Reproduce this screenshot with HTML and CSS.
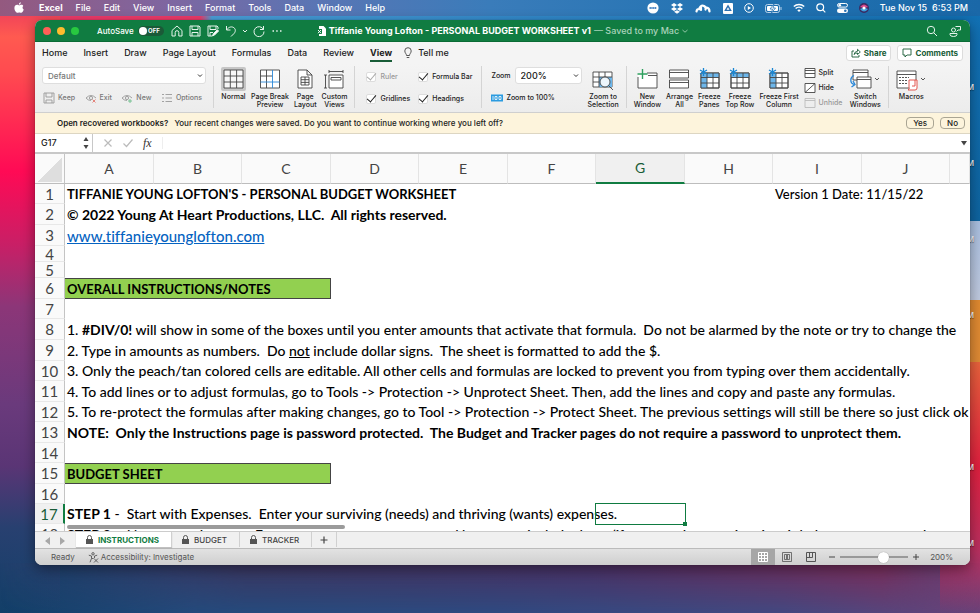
FILE: index.html
```html
<!DOCTYPE html>
<html lang="en">
<head>
<meta charset="utf-8">
<title>PERSONAL BUDGET WORKSHEET v1</title>
<link rel="stylesheet" href="styles.css">
</head>
<body>
<div class="desktop">
  <div class="files" aria-hidden="true">
    <span>M</span><span>M</span><span>M</span><span>M</span><span class="gone"></span><span>M</span><span>M</span>
  </div>

  <header class="menubar">
    <nav class="menus">
      <svg class="apple" viewBox="0 0 10 12"><path fill="#fff" d="M6.8.3C6.9 1.500 5.900 2.700 4.900 2.700 4.800 1.500 5.800.5 6.800.3zM9.300 4.100C8.200 4.800 8.300 6.800 9.700 7.400 9.200 8.900 8.300 10.800 7.200 10.800 6.500 10.800 6.200 10.400 5.300 10.400 4.400 10.400 4 10.800 3.400 10.800 2 10.800.4 8.200.4 6 .4 3.800 1.800 2.800 3.100 2.800 4 2.800 4.700 3.400 5.200 3.400 5.700 3.400 6.500 2.700 7.600 2.800 8.300 2.800 9 3.300 9.300 4.100z"/></svg>
      <a href="#" class="app">Excel</a><a href="#">File</a><a href="#">Edit</a><a href="#">View</a><a href="#">Insert</a><a href="#">Format</a><a href="#">Tools</a><a href="#">Data</a><a href="#">Window</a><a href="#">Help</a>
    </nav>
    <div class="extras">
      <svg width="12" height="12" viewBox="0 0 12 12"><circle cx="6" cy="6" r="5.600" fill="#fff"/><path d="M2.500 6h7" stroke="#4a86c4" stroke-width="1.800" stroke-dasharray="1.400 .4"/></svg>
      <svg width="12" height="11" viewBox="0 0 12 11" fill="#fff"><path d="M3 0l3 2-3 2-3-2zM9 0l3 2-3 2-3-2zM3 4l3 2-3 2-3-2zM9 4l3 2-3 2-3-2zM6 7.200l3 1.600-3 2-3-2z"/></svg>
      <svg width="16" height="9" viewBox="0 0 16 9" fill="none" stroke="#fff" stroke-width="2.200" stroke-linecap="round"><path d="M1.500 7.500Q2 4.500 4.500 5.200M4.500 4Q6.500.5 9 2T10.500 5.500M6 3v3M11.500 3.500Q14.500 4 14.500 7.500"/></svg>
      <svg width="10" height="11" viewBox="0 0 10 11"><rect width="10" height="11" rx="1" fill="#fff"/><path d="M5 2.800l2.600 4.600H2.400z" fill="none" stroke="#2c6fb0" stroke-width="1.400"/></svg>
      <svg width="10" height="10" viewBox="0 0 10 10"><circle cx="5" cy="5" r="4.300" fill="none" stroke="#fff"/><path d="M3.800 3l3.200 2-3.200 2z" fill="#fff"/></svg>
      <svg width="17" height="9" viewBox="0 0 17 9"><rect x=".5" y=".5" width="14" height="8" rx="2" fill="none" stroke="#b9d3ea"/><rect x="2" y="2" width="11" height="5" rx="1" fill="#fff"/><path d="M9 0L5 5h2.500L6.500 9l4-5H8z" fill="#fff" stroke="#2a73b4" stroke-width=".8"/><path d="M16 3v3" stroke="#b9d3ea"/></svg>
      <svg width="12" height="10" viewBox="0 0 12 10" fill="none" stroke="#fff" stroke-width="1.400"><path d="M.8 3.600a7.400 7.400 0 0 1 10.400 0M2.600 5.600a4.900 4.900 0 0 1 6.800 0"/><path d="M4.300 7.300a2.500 2.500 0 0 1 3.400 0L6 9z" fill="#fff" stroke="none"/></svg>
      <svg width="10" height="10" viewBox="0 0 10 10" fill="none" stroke="#fff" stroke-width="1.200"><circle cx="4.200" cy="4.200" r="3.400"/><path d="M6.700 6.700L9.300 9.300"/></svg>
      <svg width="11" height="10" viewBox="0 0 11 10"><rect x=".5" y=".5" width="10" height="3.600" rx="1.800" fill="none" stroke="#fff"/><circle cx="2.800" cy="2.300" r="1.300" fill="#fff"/><rect x="0" y="5.400" width="11" height="4.600" rx="2.300" fill="#fff"/><circle cx="8.300" cy="7.700" r="1.300" fill="#2a73b4"/></svg>
      <svg width="10" height="10" viewBox="0 0 10 10"><circle cx="5" cy="5" r="5" fill="#3b2a62"/><path d="M1 4Q5-1 9 4L5 5z" fill="#d84a8c"/><path d="M1 6q4 5 8 0L5 4.500z" fill="#3fa0dc"/><circle cx="5" cy="5" r="1.500" fill="#fff"/></svg>
      <span class="clock"><span>Tue Nov 15</span><span>6:53 PM</span></span>
    </div>
  </header>

  <main class="window">
    <div class="titlebar">
      <div class="quick">
        <span class="lights"><i class="red"></i><i class="amber"></i><i class="lime"></i></span>
        <label class="autosave"><span>AutoSave</span><span class="switch"><input type="checkbox" role="switch"><b>OFF</b></span></label>
        <div class="quick-icons">
          <button aria-label="Home"><svg width="12" height="12" viewBox="0 0 12 12"><path d="M1 5.500L6 1l5 4.500V11H7.800V7.500a1.800 1.800 0 0 0-3.600 0V11H1z"/></svg></button>
          <button aria-label="Save"><svg width="12" height="12" viewBox="0 0 12 12"><path d="M1 1h9l1 1v9H1zM3 1v3.500h6V1M3 11V7.500h6V11"/></svg></button>
          <button aria-label="Save a copy"><svg width="12" height="12" viewBox="0 0 12 12"><path d="M5 11H1V1h9l1 1v2M3 1v3.500h6V1M3 11V7.500h3"/><path d="M5.500 11l.8-2.300 4-4 1.300 1.300-4 4z" fill="#fff"/></svg></button>
          <button aria-label="Undo"><svg width="12" height="12" viewBox="0 0 12 12"><path d="M1.500 1v4h4M1.500 5C4 1.500 7 1.300 9 2.800S10.500 7 9 8.500L6 11.500"/></svg></button>
          <button class="tight" aria-label="Undo history"><svg width="6" height="12" viewBox="0 0 6 12"><path d="M1 5l2 2 2-2"/></svg></button>
          <button aria-label="Redo"><svg width="12" height="12" viewBox="0 0 12 12"><path d="M10.500 1v3.500H7M10.500 4.500A5 5 0 1 0 11 6.500"/></svg></button>
          <button aria-label="More"><svg width="12" height="12" viewBox="0 0 12 12"><path d="M1.500 6h1.500M5.200 6h1.500M9 6h1.500" stroke-width="1.500"/></svg></button>
        </div>
      </div>
      <h1 class="doc"><svg width="9" height="10" viewBox="0 0 9 10"><path d="M2 0h4.500L9 2.500V10H2z" fill="#fff"/><rect y="3" width="5" height="5" fill="#107c41"/><path d="M1 4l3 3.200M4 4L1 7.200" stroke="#fff"/></svg><span>Tiffanie Young Lofton - PERSONAL BUDGET WORKSHEET v1</span><span class="saved">— Saved to my Mac</span><svg width="6" height="6" viewBox="0 0 6 6"><path d="M.5 2L3 4.200 5.500 2" fill="none" stroke="#8fc5a6"/></svg></h1>
      <div class="title-right">
        <button aria-label="Search"><svg width="12" height="12" viewBox="0 0 12 12"><circle cx="5" cy="5" r="3.700"/><path d="M7.700 7.700L11 11"/></svg></button>
        <button aria-label="Collaborate"><svg width="13" height="12" viewBox="0 0 13 12"><circle cx="4.500" cy="5" r="2"/><path d="M1 8.500h7v1q0 2-3.500 2T1 9.500zM6.500 1.500h5v3.500H9L7.500 6.500"/></svg></button>
      </div>
    </div>

    <nav class="tabs">
      <a href="#">Home</a><a href="#">Insert</a><a href="#">Draw</a><a href="#">Page Layout</a><a href="#">Formulas</a><a href="#">Data</a><a href="#">Review</a><a href="#" class="active">View</a>
      <a href="#" class="tell"><svg width="8" height="12" viewBox="0 0 8 12" fill="none" stroke="#444" stroke-width=".9"><path d="M2.500 8.500C2.500 6.800.8 6 .8 3.900a3.200 3.200 0 0 1 6.400 0C7.200 6 5.500 6.800 5.500 8.500zM2.700 10.500h2.600"/></svg>Tell me</a>
      <div class="tab-actions">
        <button class="pill"><svg width="10" height="10" viewBox="0 0 10 10"><path d="M3 3H1v6h7V7M3 6.500Q3.500 3.500 6.500 3.300V1.300L9.300 4 6.500 6.500V5Q4 5 3 6.500z"/></svg>Share</button>
        <button class="pill"><svg width="10" height="10" viewBox="0 0 10 10"><path d="M1 1h8v6H5L3 9V7H1z"/></svg>Comments</button>
      </div>
    </nav>

    <div class="ribbon">
      <section class="group sheetview">
        <select aria-label="Sheet view" class="combo wide dim"><option>Default</option></select>
        <div class="row">
          <button class="mini dim"><svg width="12" height="12" viewBox="0 0 12 12"><path d="M1 1h10v10H1zM3 1v4h6V1M3 11V8h6v3"/></svg>Keep</button>
          <button class="mini dim"><svg width="12" height="12" viewBox="0 0 12 12"><path d="M1 6q5-5 10 0M1 6q2 2.500 5 2.500"/><circle cx="6" cy="6" r="1.600"/><path d="M7.500 7.500l3 3M10.500 7.500l-3 3" stroke="#e2786f"/></svg>Exit</button>
          <button class="mini dim"><svg width="12" height="12" viewBox="0 0 12 12"><path d="M1 6q5-5 10 0M1 6q2 2.500 5 2.500"/><circle cx="6" cy="6" r="1.600"/><path d="M9 7v4M7 9h4" stroke="#6bbd8a"/></svg>New</button>
          <button class="mini dim"><svg width="12" height="12" viewBox="0 0 12 12"><path d="M1 2.500h2M1 6h2M1 9.500h2M4.500 2.500H11M4.500 6H11M4.500 9.500H11"/></svg>Options</button>
        </div>
      </section>

      <section class="group bigs">
        <button class="big on"><svg width="25" height="24" viewBox="0 0 25 24"><rect width="25" height="24" rx="2" fill="#c6c6c6" stroke="none"/><path fill="#f7f7f7" d="M3 3h19v18H3z"/><path d="M3 9h19M3 15h19M9.300 3v18M15.600 3v18"/></svg><span>Normal</span></button>
        <button class="big"><svg width="20" height="24" viewBox="0 0 20 24"><path fill="#fff" d="M.5 3h19v18H.5z"/><path d="M.5 9h12M6.500 3v12M6.500 15v6"/><path stroke="#2b88d8" d="M12.500 3v18M.5 15h19"/></svg><span>Page Break<br>Preview</span></button>
        <button class="big"><svg width="16" height="24" viewBox="0 0 16 24"><path fill="#fff" d="M1 3h9l5 5v13H1zM10 3v5h5"/><path d="M4 10h8v8H4zM4 12.700h8M4 15.400h8M8 10v8"/></svg><span>Page<br>Layout</span></button>
        <button class="big"><svg width="20" height="24" viewBox="0 0 20 24"><path fill="#fff" d="M5 8h14v13H5z"/><path d="M5 4.500h14M5 3v3M19 3v3M1.500 8v13M0 8h3M0 21h3M7 10.500h10v2.500H7z"/></svg><span>Custom<br>Views</span></button>
      </section>

      <section class="group checks">
        <label class="off"><input type="checkbox" checked disabled>Ruler</label>
        <label><input type="checkbox" checked>Formula Bar</label>
        <label><input type="checkbox" checked>Gridlines</label>
        <label><input type="checkbox" checked>Headings</label>
      </section>

      <section class="group zoomgroup">
        <div class="zoomcol">
          <label class="zoomrow">Zoom<select class="combo strong"><option>200%</option></select></label>
          <button class="mini"><svg width="12" height="12" viewBox="0 0 12 12"><path fill="#2b9be0" stroke="none" d="M0 2.500h12v7H0z"/><path stroke="#fff" d="M2 4v4M4 4.500h2v3H4zM8 4.500h2v3H8z" stroke-width=".8"/></svg>Zoom to 100%</button>
        </div>
        <button class="big"><svg width="22" height="24" viewBox="0 0 22 24"><path fill="#fff" d="M1 5h19v15H1z"/><path fill="#6db6ea" stroke="none" d="M7 10h13v10H7z"/><path d="M1 10h19M1 15h6M7 5v15M13 5v5"/><circle cx="13" cy="15" r="5" fill="#eef6fc"/><path d="M16.500 18.500L21 23"/></svg><span>Zoom to<br>Selection</span></button>
      </section>

      <section class="group bigs">
        <button class="big"><svg width="21" height="24" viewBox="0 0 21 24"><path fill="#fff" stroke="none" d="M1 6h19v15H1z"/><path d="M1 10v11h19V6H10M11 8.500h9" /><path stroke="#2ea05e" stroke-width="1.400" d="M5.500 2v10M.5 7h10"/></svg><span>New<br>Window</span></button>
        <button class="big"><svg width="20" height="24" viewBox="0 0 20 24"><path fill="#fff" d="M.5 3h19v8H.5zM.5 13h19v8H.5z"/><path d="M.5 5.500h19M.5 15.500h19"/></svg><span>Arrange<br>All</span></button>
        <button class="big"><svg width="21" height="24" viewBox="0 0 21 24"><path fill="#fff" d="M2 6h18v15H2z"/><path fill="#6db6ea" stroke="none" d="M2 6h18v4.500H8V21H2z"/><path d="M2 10.500h18M2 16h18M8 6v15M14 6v15M2 6h18v15H2z"/><path class="star" d="M4.500 1v8M1 3l7 4M8 3L1 7"/></svg><span>Freeze<br>Panes</span></button>
        <button class="big"><svg width="21" height="24" viewBox="0 0 21 24"><path fill="#fff" d="M2 6h18v15H2z"/><path fill="#6db6ea" stroke="none" d="M2 6h18v4.500H2z"/><path d="M2 10.500h18M2 16h18M8 6v15M14 6v15M2 6h18v15H2z"/><path class="star" d="M4.500 1v8M1 3l7 4M8 3L1 7"/></svg><span>Freeze<br>Top Row</span></button>
        <button class="big"><svg width="21" height="24" viewBox="0 0 21 24"><path fill="#fff" d="M2 6h18v15H2z"/><path fill="#6db6ea" stroke="none" d="M2 6h6v15H2z"/><path d="M2 10.500h18M2 16h18M8 6v15M14 6v15M2 6h18v15H2z"/><path class="star" d="M4.500 1v8M1 3l7 4M8 3L1 7"/></svg><span>Freeze First<br>Column</span></button>
        <div class="stack">
          <button class="mini"><svg width="12" height="12" viewBox="0 0 12 12"><path fill="#fff" d="M1 1.500h10v9H1z"/><path d="M1 3.500h10M1 6.500h10"/></svg>Split</button>
          <button class="mini"><svg width="12" height="12" viewBox="0 0 12 12"><path fill="#fff" d="M1 1.500h10v9H1z"/><path d="M1 10.500l10-9"/></svg>Hide</button>
          <button class="mini off"><svg width="12" height="12" viewBox="0 0 12 12"><path d="M1 1.500h10v9H1zM1 3.500h10"/></svg>Unhide</button>
        </div>
        <button class="big"><svg width="32" height="24" viewBox="0 0 32 24"><path fill="#fff" d="M4 3h15v10H4zM4 5.500h15"/><path fill="#fff" d="M8 10h14v11H8zM8 12.500h14"/><path stroke="#2b88d8" stroke-width="1.300" d="M5 8.500C1 10 .5 16 5 17.500M2.500 20L6 17.500 4 14"/><path d="M26 11l2 2 2-2"/></svg><span>Switch<br>Windows</span></button>
      </section>

      <section class="group bigs last">
        <button class="big"><svg width="30" height="24" viewBox="0 0 30 24"><path fill="#fff" d="M1 4h19v17H1zM1 7.500h19"/><path stroke-dasharray="2 1" d="M3 10.500h10M3 13.500h8M3 16.500h8"/><path fill="#fff" stroke="#e0463c" d="M13 13h8v8q0 2-2 2h-7q2-1 1-3zM19 13v6h-3"/><path d="M25 11l2 2 2-2"/></svg><span>Macros</span></button>
      </section>
    </div>

    <div class="notice">
      <p><strong>Open recovered workbooks?</strong> Your recent changes were saved. Do you want to continue working where you left off?</p>
      <button>Yes</button><button>No</button>
    </div>

    <div class="formula">
      <div class="name"><input aria-label="Name box" value="G17"><svg width="6" height="14" viewBox="0 0 6 14" fill="#444"><path d="M3 1l2.500 4h-5zM3 13L.5 9h5z"/></svg></div>
      <button aria-label="Cancel"><svg width="10" height="10" viewBox="0 0 10 10"><path d="M1.500 1.500l7 7M8.500 1.500l-7 7"/></svg></button>
      <button aria-label="Enter"><svg width="10" height="10" viewBox="0 0 10 10"><path d="M.5 5.500l3 3 6-7"/></svg></button>
      <button class="fx" aria-label="Insert function">fx</button>
      <input class="entry" aria-label="Formula">
      <svg width="6" height="6" viewBox="0 0 6 6"><path d="M0 1h6L3 5.500z" fill="#444"/></svg>
    </div>

    <div class="sheet">
      <table>
        <colgroup><col class="c-num"><col class="c-even"><col class="c-odd"><col class="c-even"><col class="c-odd"><col class="c-even"><col class="c-odd"><col class="c-even"><col class="c-odd"><col class="c-even"><col class="c-odd"><col></colgroup>
        <thead><tr><th class="corner"></th><th>A</th><th>B</th><th>C</th><th>D</th><th>E</th><th>F</th><th class="sel">G</th><th>H</th><th>I</th><th>J</th><th></th></tr></thead>
        <tbody>
          <tr><th>1</th><td colspan="8" class="caps">TIFFANIE YOUNG LOFTON'S - PERSONAL BUDGET WORKSHEET</td><td colspan="3" class="version">Version 1 Date: 11/15/22</td></tr>
          <tr class="tall"><th>2</th><td colspan="11"><b>© 2022 Young At Heart Productions, LLC.&nbsp; All rights reserved.</b></td></tr>
          <tr class="tall"><th>3</th><td colspan="11" class="link"><a href="#">www.tiffanieyounglofton.com</a></td></tr>
          <tr class="short"><th>4</th><td colspan="11"></td></tr>
          <tr class="short"><th>5</th><td colspan="11"></td></tr>
          <tr class="tall"><th>6</th><td colspan="3" class="caps band">OVERALL INSTRUCTIONS/NOTES</td><td colspan="8"></td></tr>
          <tr><th>7</th><td colspan="11"></td></tr>
          <tr class="tall"><th>8</th><td colspan="11">1. <b>#DIV/0!</b> will show in some of the boxes until you enter amounts that activate that formula.&nbsp; Do not be alarmed by the note or try to change the</td></tr>
          <tr class="tall"><th>9</th><td colspan="11">2. Type in amounts as numbers.&nbsp; Do <u>not</u> include dollar signs.&nbsp; The sheet is formatted to add the $.</td></tr>
          <tr><th>10</th><td colspan="11">3. Only the peach/tan colored cells are editable. All other cells and formulas are locked to prevent you from typing over them accidentally.</td></tr>
          <tr class="tall"><th>11</th><td colspan="11">4. To add lines or to adjust formulas, go to Tools -&gt; Protection -&gt; Unprotect Sheet. Then, add the lines and copy and paste any formulas.</td></tr>
          <tr><th>12</th><td colspan="11">5. To re-protect the formulas after making changes, go to Tool -&gt; Protection -&gt; Protect Sheet. The previous settings will still be there so just click ok</td></tr>
          <tr class="tall"><th>13</th><td colspan="11"><b>NOTE:&nbsp; Only the Instructions page is password protected.&nbsp; The Budget and Tracker pages do not require a password to unprotect them.</b></td></tr>
          <tr><th>14</th><td colspan="11"></td></tr>
          <tr class="tall"><th>15</th><td colspan="3" class="caps band">BUDGET SHEET</td><td colspan="8"></td></tr>
          <tr><th>16</th><td colspan="11"></td></tr>
          <tr><th class="sel">17</th><td colspan="6"><b>STEP 1</b> -&nbsp; Start with Expenses.&nbsp; Enter your surviving (needs) and thriving (wants) expenses.</td><td class="cursor"></td><td colspan="4"></td></tr>
          <tr class="tall"><th>18</th><td colspan="11"><b>STEP 2</b> -&nbsp; Next, enter Income.&nbsp; Enter your sources, amounts, and be sure to include dates (if you can do an estimation, it helps you as you make</td></tr>
        </tbody>
      </table>
      <div class="hscroll"></div>
    </div>

    <div class="sheettabs">
      <span class="arrows"><svg width="20" height="8" viewBox="0 0 20 8" fill="#a8a8a8"><path d="M5 0v8L0 4zM15 0v8l5-4z"/></svg></span>
      <button class="active"><svg width="7" height="9" viewBox="0 0 7 9"><path d="M0 4h7v5H0z" fill="#555"/><path d="M1.500 4V2.500a2 2 0 0 1 4 0V4" fill="none" stroke="#555"/></svg>INSTRUCTIONS</button>
      <button><svg width="7" height="9" viewBox="0 0 7 9"><path d="M0 4h7v5H0z" fill="#555"/><path d="M1.500 4V2.500a2 2 0 0 1 4 0V4" fill="none" stroke="#555"/></svg>BUDGET</button>
      <button><svg width="7" height="9" viewBox="0 0 7 9"><path d="M0 4h7v5H0z" fill="#555"/><path d="M1.500 4V2.500a2 2 0 0 1 4 0V4" fill="none" stroke="#555"/></svg>TRACKER</button>
      <button class="add" aria-label="Add sheet"><svg width="8" height="8" viewBox="0 0 8 8"><path d="M4 .5v7M.5 4h7" stroke="#444" stroke-width="1.200"/></svg></button>
    </div>

    <footer class="status">
      <span>Ready</span>
      <span class="access"><svg width="11" height="11" viewBox="0 0 11 11" fill="none" stroke="#555" stroke-width=".9"><circle cx="5" cy="1.800" r="1.200"/><path d="M.8 3.200L3.500 4v2.500L2 10.300M9.200 3.200L6.500 4v2M3.500 6.500h2M6 6.500l4 4M10 6.500l-4 4"/></svg>Accessibility: Investigate</span>
      <div class="viewbtns">
        <button class="on" aria-label="Normal view"><svg width="10" height="10" viewBox="0 0 10 10" stroke="#fff" fill="none"><path d="M.5.5h9v9h-9zM.5 3.500h9M.5 6.500h9M3.500.5v9M6.500.5v9"/></svg></button>
        <button aria-label="Page layout view"><svg width="10" height="10" viewBox="0 0 10 10" stroke="#555" fill="none"><path d="M.5.500h9v9h-9zM2.500 2.500h5v5h-5zM4.500 3v4M5.500 3v4" stroke-width=".8"/></svg></button>
        <button aria-label="Page break view"><svg width="10" height="10" viewBox="0 0 10 10" stroke="#555" fill="none"><path d="M.5.500h9v9h-9zM3.500.5v5M6.500.5v5M.5 5.500h6"/></svg></button>
      </div>
      <div class="zoomer">
        <button aria-label="Zoom out"><svg width="6" height="6" viewBox="0 0 6 6"><path d="M0 3h6" stroke="#444"/></svg></button>
        <input type="range" min="0" max="100" value="66" aria-label="Zoom level">
        <button aria-label="Zoom in"><svg width="6" height="6" viewBox="0 0 6 6"><path d="M0 3h6M3 0v6" stroke="#444"/></svg></button>
        <span class="pct">200%</span>
      </div>
    </footer>
  </main>
</div>
</body>
</html>
```
FILE: styles.css
```css
* { box-sizing: border-box; }
body { margin: 0; font: 500 8px/10px Inter, "Liberation Sans", sans-serif; color: #222; }
button, input, select { font: inherit; color: inherit; border: 0; background: none; padding: 0; margin: 0; }
svg { display: block; flex: none; }
a { color: inherit; text-decoration: none; }

.desktop {
  position: relative; height: 100vh; display: flex; flex-direction: column; overflow: hidden;
  background:
    linear-gradient(#1272b6 0, #0e64a0 36%, #a9bfe0 36%, #c0cadf 49%, #e08a30 49%, #de8a35 59%, #e8623c 59%, #e0203f 76%, #b83060 90%, #6a427800 100%) right top / 40px 100% no-repeat,
    linear-gradient(#e8365f 0, #ff5a50 6%, #ff4a50 12%, #ff0a55 28%, #c81f66 40%, #8c3678 50%, #6a3a7c 66%, #5a3575 76%, #284070 86%, #123f6800 100%) left top / 60px 100% no-repeat,
    linear-gradient(90deg, #ee3a6a 0, #ee3a6a 200px, #4aa0da 212px, #2e86c8 60%, #1272b6 100%) left top / 100% 60px no-repeat,
    linear-gradient(90deg, #123f68, #244a7c 20%, #2f4a80 50%, #444880 80%, #6a4278 100%);
}
.desktop::after {
  content: ""; position: absolute; z-index: 0; left: 0; right: 0; bottom: 0; height: 50px;
  background: linear-gradient(90deg, #173f6a00, #3b355f 25%, #4a2f62 60%, #7a2c58 90%, #8f345f00);
  -webkit-mask: linear-gradient(#000, transparent); mask: linear-gradient(#000, transparent);
}
.files { position: absolute; right: 6px; top: 82px; display: grid; grid-auto-rows: 76px; color: #fff; font-size: 8px; text-shadow: 0 1px 1px #0008; }

.menubar {
  height: 16px; display: flex; justify-content: space-between; align-items: center; padding: 0 12px 0 14px;
  color: #fff; font-size: 9px; position: relative;
  background: linear-gradient(90deg, #94597f 0, #7f66a0 17%, #5a75b4 32%, #3a7cba 50%, #2273b2 75%, #1a68a8 100%);
}
.menus { display: flex; align-items: center; gap: 13px; }
.apple { width: 10px; height: 12px; margin-right: 2px; }
.app { font-weight: 700; }
.extras { display: flex; align-items: center; gap: 11px; }
.extras svg:nth-child(-n+3) { margin-right: 1px; }
.clock { display: flex; gap: 5px; }

.window {
  position: relative; z-index: 1; flex: 1; margin: 4px 10px 48px 35px; display: flex; flex-direction: column; min-height: 0;
  border-radius: 7px; overflow: hidden; background: #fff; box-shadow: 0 4px 14px #0006, 0 0 1px #0008;
}
.window > * { flex-shrink: 0; }
.titlebar { height: 22px; display: grid; grid-template-columns: 1fr auto 1fr; align-items: center; padding: 0 8px; background: #107c41; border-bottom: 1px solid #0a6b35; color: #fff; }
.quick, .quick-icons, .lights, .autosave, .title-right, .doc { display: flex; align-items: center; }
.lights { gap: 6px; }
.lights i { width: 8px; height: 8px; border-radius: 50%; }
.red { background: #ff5f57; }
.amber { background: #febc2e; }
.lime { background: #28c840; }
.autosave { margin-left: 18px; gap: 4px; }
.switch { position: relative; }
.switch input { appearance: none; display: block; width: 26px; height: 10px; border-radius: 5px; background: #1b5a38; }
.switch input::before { content: ""; display: block; width: 8px; height: 8px; margin: 1px; border-radius: 50%; background: #fff; }
.switch b { position: absolute; right: 4px; top: 0; font-size: 6px; }
.quick-icons { margin-left: 7px; gap: 6px; }
.titlebar button svg { fill: none; stroke: #e6f3ec; }
.tight { margin: 0 -1px; }
.doc { margin: 0; gap: 3px; font-size: 9px; font-weight: 700; white-space: nowrap; }
.saved { font-weight: 500; color: #a9d3bb; }
.title-right { justify-content: flex-end; gap: 11px; }

.tabs { height: 22px; display: flex; align-items: center; gap: 16px; padding: 0 7px; background: #f4f4f4; font-size: 9px; }
.tabs a { display: flex; align-items: center; height: 18px; border-top: 2px solid transparent; border-bottom: 2px solid transparent; white-space: nowrap; }
.tabs .active { font-weight: 700; border-bottom-color: #185c37; }
.tabs .tell { gap: 6px; margin-left: -4px; }
.tab-actions { margin-left: auto; display: flex; gap: 6px; }
.pill { display: flex; align-items: center; gap: 3px; height: 16px; padding: 0 4px; background: #fff; border: 1px solid #dcdcdc; border-radius: 3px; font-size: 8px; font-weight: 700; color: #185c37; }
.pill svg { fill: none; stroke: #185c37; stroke-width: .9; }

.ribbon { height: 49px; display: flex; align-items: flex-start; padding: 2px 7px 0; background: linear-gradient(#f4f4f4, #ececec); border-bottom: 1px solid #cfcfcf; font-size: 7px; line-height: 8px; white-space: nowrap; }
.ribbon svg { fill: none; stroke: #444; stroke-width: .9; }
.ribbon .star { stroke: #1b87d4; stroke-width: 1.3; }
.group { height: 42px; padding-right: 7px; margin-right: 7px; border-right: 1px solid #d4d4d4; display: flex; flex: none; }
.last { border: 0; }
.combo { appearance: none; height: 17px; width: 67px; padding: 0 5px; font-size: 8px; background: #fff url("data:image/svg+xml,%3Csvg xmlns='http://www.w3.org/2000/svg' width='6' height='4'%3E%3Cpath d='M1 .5l2 2 2-2' fill='none' stroke='%23333'/%3E%3C/svg%3E") no-repeat right 2px center; border: 1px solid #dedede; border-radius: 3px; }
.strong { font-size: 9px; }
.wide { width: 164px; }
.dim, .mini.dim { color: #777; }
.sheetview { flex-direction: column; padding-top: 1px; gap: 8px; }
.row { display: flex; justify-content: space-between; padding: 0 4px 0 1px; }
.mini { display: flex; align-items: center; gap: 3px; }
.dim svg { stroke: #999; }
.off, .mini.off { color: #999; }
.off svg { stroke: #bbb; }
.bigs { gap: 5px; }
.big { display: flex; flex-direction: column; justify-content: flex-start; align-items: center; gap: 2px; padding-top: 1px; text-align: center; line-height: 8px; }
.checks { display: grid; grid-template-columns: auto auto; grid-template-rows: 17px 17px; row-gap: 5px; column-gap: 8px; padding: 2px 9px 0 4px; align-items: center; }
.checks label { display: flex; align-items: center; gap: 4px; }
.checks input { appearance: none; width: 10px; height: 10px; border-radius: 2px; background: #fff; border: 1px solid #ddd; }
.checks input::before { content: ""; display: block; width: 8px; height: 4px; border: solid #222; border-width: 0 0 1px 1px; transform: rotate(-50deg); }
.checks .off input::before { border-color: #aaa; }
.zoomgroup { gap: 6px; padding-left: 2px; }
.zoomcol { padding-top: 1px; display: flex; flex-direction: column; gap: 8px; }
.zoomrow { display: flex; align-items: center; gap: 4px; }
.stack { display: flex; flex-direction: column; gap: 3px; padding-top: 1px; margin-right: 2px; }

.notice { height: 21px; display: flex; align-items: center; gap: 6px; padding: 0 5px 0 22px; background: #fdf4dc; border-bottom: 1px solid #ddd6c2; }
.notice p { margin: 0; flex: 1; }
.notice strong { font-weight: 600; margin-right: 4px; }
.notice button { height: 12px; padding: 0 6px; border: 1px solid #aaa593; border-radius: 4px; }

.formula { height: 20px; display: flex; align-items: center; gap: 10px; padding-right: 3px; border-bottom: 2px solid #c8c8c8; background: #fff; }
.name { display: flex; align-items: center; height: 100%; width: 58px; padding: 0 3px 0 6px; border-right: 1px solid #c8c8c8; }
.name input { flex: 1; min-width: 0; font-size: 9px; }
.formula button svg { fill: none; stroke: #bbb; stroke-width: 1.2; }
.fx { font: italic 12px/14px "Liberation Serif", serif; color: #333; }
.entry { flex: 1; height: 12px; border-left: 1px solid #eee; }

.sheet { position: relative; flex: 1; min-height: 0; overflow: hidden; font-family: Lato, "Noto Sans", sans-serif; font-variant-ligatures: none; }
.sheet table { border-collapse: separate; border-spacing: 0; table-layout: fixed; width: 100%; font-size: 14px; line-height: 18px; color: #000; }
.c-num { width: 30px; }
.c-even { width: 89px; }
.c-odd { width: 88px; }
.sheet th { padding: 0; font-size: 15px; font-weight: 400; color: #444; background: #fafafa; border-right: 1px solid #c4c4c4; border-bottom: 1px solid #e8e8e8; }
.sheet thead th { height: 30px; font-size: 14px; border-right-color: #e4e4e4; border-bottom-color: #bdbdbd; }
.sheet thead .corner { background: linear-gradient(135deg, transparent 50%, #dedede 50%) 3px 3px / 24px 25px no-repeat #fafafa; border-right-color: #c4c4c4; }
.sheet thead .sel { background: #f0f0f0; color: #185c37; border-bottom: 2px solid #107c41; }
.sheet tbody tr { height: 20px; }
.sheet tbody .tall { height: 21px; }
.sheet tbody .short { height: 16px; line-height: 14px; }
.sheet tbody .sel { color: #185c37; border-right: 2px solid #107c41; background: #f0f0f0; }
.sheet td { padding: 0 0 0 2px; white-space: nowrap; }
.sheet .link { font-size: 15px; }
.link a { color: #0563c1; text-decoration: underline; }
.sheet .version { font-size: 13px; }
.sheet .caps { font-size: 13px; font-weight: 700; }
.sheet .band { background: #92d050; border: 1px solid #444; border-left: 0; }
.cursor { position: relative; }
.cursor::before { content: ""; position: absolute; inset: -1px; border: 1px solid #107c41; outline: 1px solid #107c4155; outline-offset: -1px; }
.cursor::after { content: ""; position: absolute; right: -2px; bottom: -2px; width: 4px; height: 4px; background: #107c41; }
.hscroll { position: absolute; left: 32px; bottom: 2px; width: 278px; height: 4px; border-radius: 2px; background: #9b9b9b; }

.sheettabs { height: 18px; display: flex; align-items: flex-start; background: #f0f0f0; border-top: 1px solid #ccc; border-bottom: 1px solid #bbb; }
.arrows { padding: 5px 11px 0 10px; }
.sheettabs button { display: flex; align-items: center; gap: 5px; height: 15px; padding: 0 12px 0 10px; border-right: 1px solid #d0d0d0; color: #444; }
.sheettabs .add { padding: 0 8px; }
.sheettabs .active { background: #fff; color: #107c41; font-weight: 700; box-shadow: 0 1px 1px #0003; }

.status { height: 16px; display: flex; align-items: center; gap: 13px; padding: 0 17px 0 16px; background: linear-gradient(#e2e2e2, #cfcfcf); color: #555; font-weight: 400; }
.access { display: flex; align-items: center; gap: 2px; }
.viewbtns { margin-left: auto; display: flex; height: 100%; }
.viewbtns button { width: 24px; display: grid; place-items: center; }
.viewbtns .on { background: #a6a6a6; }
.zoomer { display: flex; align-items: center; gap: 5px; margin-left: -7px; }
.zoomer input { appearance: none; width: 68px; height: 12px; background: linear-gradient(#999, #999) center / 100% 2px no-repeat; }
.zoomer input::-webkit-slider-thumb { appearance: none; width: 11px; height: 11px; border-radius: 50%; background: #fff; box-shadow: 0 0 1px #0006; }
.pct { margin-left: 6px; }
```
